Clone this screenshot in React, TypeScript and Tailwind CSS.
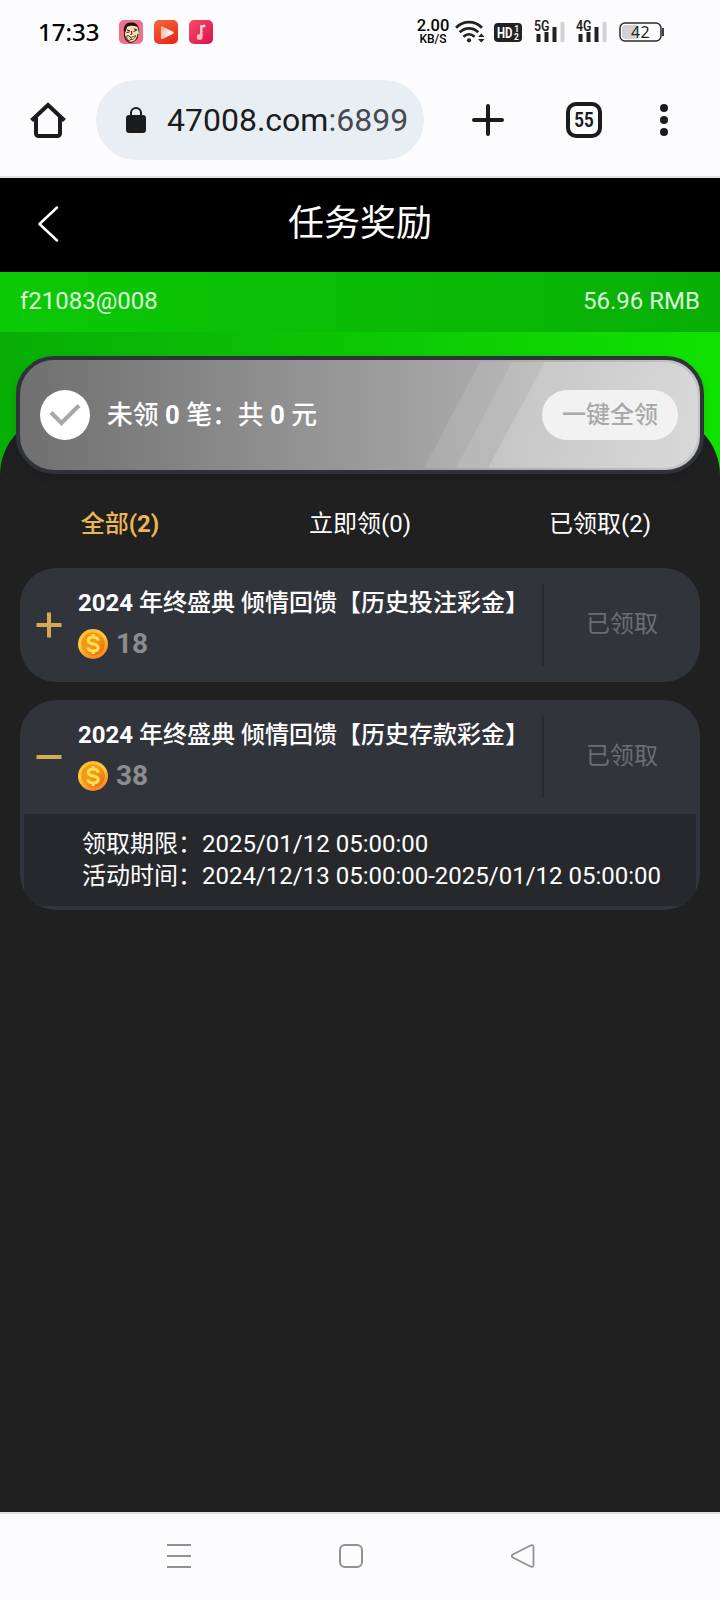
import type { ReactNode } from "react";

function AppFace() {
  return (
    <svg className="h-6 w-6" viewBox="0 0 24 24">
      <rect width="24" height="24" rx="5" fill="#f0708c" />
      <path d="M6 10c0-5 3-7 7-7s7 3 7 7l-.5 6-4 6h-5l-5-5z" fill="#f9dfb4" />
      <path d="M5 12C4 5 8 2 12.500 2.500 17 2 21 6 20 13l-1.500-6C15 5.500 11 5 8 7l-1.500 5z" fill="#1c1412" />
      <path d="M5.500 11v5c1 4 3.500 6 6 6.500 4-.5 7-3.500 7.500-8.500" fill="none" stroke="#2b1a17" strokeWidth="1.100" />
      <path d="M8 10l3 1M14.500 11.500L18 10M7.500 12.500l3-.5M15 9l2.500.5M12.500 11l.5 3-1.500.5" stroke="#2b1a17" strokeWidth="1" fill="none" />
      <path d="M9 16.500c3 1.500 5 .5 7.500-1-.5 3-3 4.500-5 4z" fill="#fff" stroke="#4a2b25" strokeWidth=".9" />
      <path d="M6.500 16.500l3-1 3 3-2.500 3z" fill="#f7c79a" stroke="#2b1a17" strokeWidth=".8" />
    </svg>
  );
}

function AppVideo() {
  return (
    <svg className="h-6 w-6" viewBox="0 0 24 24">
      <defs>
        <linearGradient id="vid" x1="0" y1="0" x2="0.500" y2="1">
          <stop offset="0" stopColor="#f4693a" />
          <stop offset="1" stopColor="#ea2c1c" />
        </linearGradient>
        <linearGradient id="vidp" x1="0" y1="0" x2="1" y2="0.300">
          <stop offset="0" stopColor="#f9b7a2" />
          <stop offset="1" stopColor="#fff" />
        </linearGradient>
      </defs>
      <rect width="24" height="24" rx="5" fill="url(#vid)" />
      <path d="M8 7.500v10.500l10.500-5.200z" fill="url(#vidp)" stroke="url(#vidp)" strokeWidth="2.200" strokeLinejoin="round" />
    </svg>
  );
}

function AppMusic() {
  return (
    <svg className="h-6 w-6" viewBox="0 0 24 24">
      <defs>
        <linearGradient id="mus" x1="0" y1="0" x2="1" y2="1">
          <stop offset="0" stopColor="#fb4c62" />
          <stop offset="1" stopColor="#d5124f" />
        </linearGradient>
      </defs>
      <rect width="24" height="24" rx="5" fill="url(#mus)" />
      <path d="M12.300 16.500V6.500l4-.8" fill="none" stroke="#fdd9de" strokeWidth="2.400" />
      <circle cx="10.600" cy="17" r="2.900" fill="#fdb9c4" />
    </svg>
  );
}

function Wifi() {
  return (
    <svg className="h-6 w-[30px]" viewBox="0 0 30 24">
      <g fill="none" stroke="#222" strokeWidth="2.700">
        <path d="M1 7.700C8.500.3 19.500.3 27 7.700" />
        <path d="M4.700 12.300c5.400-5.200 13.200-5.200 18.600 0" />
        <path d="M8.400 16.800c3.400-3.200 7.800-3.200 11.200 0" />
      </g>
      <circle cx="14" cy="20.300" r="2.100" fill="#222" />
      <path d="M23 17l3.300-3.600L29.600 17zM23 19l3.300 3.600L29.600 19z" fill="#222" />
    </svg>
  );
}

function HdBadge() {
  return (
    <svg className="h-[19px] w-7 overflow-visible" viewBox="0 0 28 19">
      <rect width="28" height="19" rx="4" fill="#222" />
      <g fill="#fff" fontFamily="Roboto, sans-serif" fontWeight="700">
        <text x="3" y="15" fontSize="15" textLength="15.500" lengthAdjust="spacingAndGlyphs">HD</text>
        <text x="20.300" y="9" fontSize="8.500">1</text>
        <text x="20" y="17.300" fontSize="8.500">2</text>
      </g>
    </svg>
  );
}

function Signal({ label }: { label: string }) {
  return (
    <svg className="h-6 w-8 overflow-visible" viewBox="0 0 32 24">
      <text x="0" y="11" fontFamily="Roboto, sans-serif" fontWeight="600" fontSize="14" textLength="15.500" lengthAdjust="spacingAndGlyphs" fill="#222">
        {label}
      </text>
      <path d="M2.500 14h4v8h-4zM10.500 12h4v10h-4zM18.500 7h4v15h-4z" fill="#222" />
      <rect x="26.500" y="2" width="4" height="20" rx=".8" fill="#d2d2d4" />
    </svg>
  );
}

function Battery() {
  return (
    <svg className="h-5 w-[46px]" viewBox="0 0 46 20">
      <rect x="1" y="1" width="41" height="18" rx="5" fill="#fff" stroke="#2b2b2b" strokeWidth="1.500" />
      <path d="M6 3h12v14H6a3 3 0 0 1-3-3V6a3 3 0 0 1 3-3z" fill="#d2d2d2" />
      <path d="M44 6v8" stroke="#2b2b2b" strokeWidth="1.800" />
      <text x="12" y="15.500" fontFamily="'Noto Sans', sans-serif" fontSize="16" letterSpacing=".4" fill="#222">42</text>
    </svg>
  );
}

function StatusBar() {
  return (
    <div className="flex h-16 items-center pr-[55px] pl-[38px]">
      <div className="w-[81px] font-['Noto_Sans',sans-serif] text-[24px] leading-6 font-medium text-black">17:33</div>
      <div className="flex gap-[11px]">
        <AppFace />
        <AppVideo />
        <AppMusic />
      </div>
      <div className="ml-auto flex items-center">
        <div className="w-[34px] text-center font-medium text-black">
          <div className="text-[16.500px] leading-[14px]">2.00</div>
          <div className="text-[12px] leading-[12px]">KB/S</div>
        </div>
        <div className="ml-[5px]"><Wifi /></div>
        <div className="ml-[9px]"><HdBadge /></div>
        <div className="ml-3"><Signal label="5G" /></div>
        <div className="ml-[10px]"><Signal label="4G" /></div>
        <div className="ml-[11px]"><Battery /></div>
      </div>
    </div>
  );
}

function BrowserBar() {
  return (
    <div className="flex h-28 items-center border-b-2 border-[#dfe2e5] pb-[2px]">
      <svg className="ml-[30px] h-9 w-9" viewBox="0 0 36 36">
        <path d="M1.500 18.500L18 3 34.500 18.500M6 15v16.500A2.500 2.500 0 0 0 8.500 34h19a2.500 2.500 0 0 0 2.500-2.500V15" fill="none" stroke="#1a1c1e" strokeWidth="4" />
      </svg>
      <div className="ml-[30px] flex h-20 w-[328px] items-center rounded-full bg-[#e7eef4] pl-[30px]">
        <svg className="h-[26px] w-5" viewBox="0 0 20 26">
          <rect y="8" width="20" height="18" rx="3" fill="#1a1c1e" />
          <path d="M5 9V6a5 5 0 0 1 10 0v3" fill="none" stroke="#1a1c1e" strokeWidth="2" />
        </svg>
        <div className="ml-[21px] text-[32px] leading-10 text-[#1a1c1e]">
          47008.com<span className="text-[#454a50]">:6899</span>
        </div>
      </div>
      <svg className="ml-12 h-8 w-8" viewBox="0 0 32 32">
        <path d="M16 2v28M2 16h28" stroke="#1a1c1e" strokeWidth="4" strokeLinecap="round" />
      </svg>
      <svg className="ml-[62px] h-9 w-9" viewBox="0 0 36 36">
        <rect x="2" y="2" width="32" height="32" rx="8" fill="none" stroke="#1a1c1e" strokeWidth="4" />
        <text x="8.300" y="25" fontFamily="Roboto, sans-serif" fontWeight="700" fontSize="19.500" textLength="19.500" lengthAdjust="spacingAndGlyphs" fill="#1a1c1e">55</text>
      </svg>
      <svg className="ml-[58px] h-8 w-2" viewBox="0 0 8 32">
        <g fill="#1a1c1e">
          <circle cx="4" cy="4" r="4" />
          <circle cx="4" cy="16" r="4" />
          <circle cx="4" cy="28" r="4" />
        </g>
      </svg>
    </div>
  );
}

function Coin() {
  return (
    <svg className="h-[30px] w-[30px]" viewBox="0 0 30 30">
      <defs>
        <linearGradient id="rim" x1="0" y1="0" x2="0.400" y2="1">
          <stop offset="0" stopColor="#fdb52c" />
          <stop offset=".5" stopColor="#fdcb40" />
          <stop offset="1" stopColor="#f98a2a" />
        </linearGradient>
        <linearGradient id="face" x1="0" y1="0" x2="1" y2="1">
          <stop offset="0" stopColor="#f3960f" />
          <stop offset=".5" stopColor="#f59a12" />
          <stop offset="1" stopColor="#e4660a" />
        </linearGradient>
      </defs>
      <circle cx="15" cy="15" r="15" fill="url(#rim)" />
      <circle cx="15" cy="15" r="11.800" fill="url(#face)" />
      <path d="M20.200 11.500c-.5-2.200-2.400-3.400-5-3.400-2.900 0-4.900 1.300-4.900 3.400 0 4.800 9.900 2.200 9.900 7 0 2.100-2.100 3.400-5 3.400-2.800 0-4.900-1.300-5.400-3.400M15.200 5v3M15.200 22v3" fill="none" stroke="#ffe05a" strokeWidth="3" />
    </svg>
  );
}

type TaskProps = { name: string; amount: string; open?: boolean; children?: ReactNode };

function TaskCard({ name, amount, open, children }: TaskProps) {
  return (
    <section className="overflow-hidden rounded-[36px] bg-[#32343c]">
      <div className="flex h-[114px]">
        <div className="flex w-[58px] items-center pl-4">
          <svg className="h-[26px] w-[26px]" viewBox="0 0 26 26">
            <path d={open ? "M.5 13h25" : "M.5 13h25M13 .5v25"} stroke="#d2ab52" strokeWidth="4" />
          </svg>
        </div>
        <div className="flex w-[464px] flex-col pt-[19px]">
          <h2 className="text-[24px] leading-8 font-medium whitespace-nowrap text-white">
            <b className="font-bold">2024</b> 年终盛典 倾情回馈【历史{name}彩金】
          </h2>
          <div className="mt-[10px] flex items-center">
            <Coin />
            <span className="ml-2 text-[28px] leading-[30px] font-bold text-[#8b8c90]">{amount}</span>
          </div>
        </div>
        <div className="my-4 flex flex-1 items-center justify-center border-l-2 border-[#292a2f] pb-[2px] text-[24px] leading-8 text-[#6c6d70]">
          已领取
        </div>
      </div>
      {children}
    </section>
  );
}

export default function App() {
  return (
    <div className="flex h-[1600px] w-[720px] flex-col overflow-hidden bg-[#202020] font-['Roboto','Noto_Sans_CJK_SC',sans-serif] whitespace-nowrap">
      <div className="h-[178px] shrink-0 bg-[#fcfcfe]">
        <StatusBar />
        <div className="h-[2px]" />
        <BrowserBar />
      </div>
      <header className="grid h-[94px] shrink-0 grid-cols-[80px_1fr_80px] items-center bg-black pb-[2px]">
        <svg className="ml-[37px] h-9 w-[22px]" viewBox="0 0 22 36">
          <path d="M20 1.500L2.500 18 20 34.500" fill="none" stroke="#fff" strokeWidth="2.500" strokeLinecap="round" strokeLinejoin="round" />
        </svg>
        <h1 className="text-center text-[36px] leading-[48px] text-white">任务奖励</h1>
      </header>
      <div className="flex h-[60px] shrink-0 items-center justify-between bg-gradient-to-r from-[#0cc905] to-[#08af06] px-5 pb-[2px] text-[24px] leading-8 text-white/85">
        <span>f21083@008</span>
        <span>56.96 RMB</span>
      </div>
      <div className="h-[143px] shrink-0 bg-gradient-to-r from-[#08ad06] to-[#10e200]">
        <div className="h-[83px]" />
        <div className="h-[60px] rounded-t-[60px] bg-[#202020]" />
      </div>
      <div className="relative z-10 mx-4 -mt-[119px] h-[118px] shrink-0 overflow-hidden rounded-[38px] border-4 border-[#2f3338] bg-gradient-to-r from-[#707070] via-[#9a9a9a] to-[#c4c4c4] shadow-[0_4px_8px_rgba(0,0,0,0.12)]">
        <svg className="absolute top-0 left-0 h-[110px] w-[680px]" viewBox="0 0 680 110">
          <defs>
            <linearGradient id="shine" x1="0" y1="0" x2="1" y2="1">
              <stop offset="0" stopColor="#fff" stopOpacity=".3" />
              <stop offset="1" stopColor="#fff" stopOpacity=".42" />
            </linearGradient>
          </defs>
          <path d="M460 2L404 108H644a34 34 0 0 0 34-34V36a34 34 0 0 0-34-34z" fill="#fff" fillOpacity=".1" />
          <path d="M492 2L436 108H644a34 34 0 0 0 34-34V36a34 34 0 0 0-34-34z" fill="#fff" fillOpacity=".1" />
          <path d="M525 2L468 108H644a34 34 0 0 0 34-34V36a34 34 0 0 0-34-34z" fill="url(#shine)" fillOpacity=".5" />
        </svg>
        <div className="relative flex h-full items-center pr-[22px] pl-5">
          <svg className="h-[50px] w-[50px]" viewBox="0 0 50 50">
            <circle cx="25" cy="25" r="25" fill="#fff" />
            <path d="M11 22.500L21.500 33 39 15.500" fill="none" stroke="#a8a8a8" strokeWidth="4.200" />
          </svg>
          <div className="ml-[17px] pb-[1px] text-[25.8px] leading-9 font-medium text-white">
            未领 <b className="font-bold">0</b> 笔：共 <b className="font-bold">0</b> 元
          </div>
          <button className="ml-auto h-[50px] w-[136px] rounded-full bg-[#f2f2f2] text-[24px] leading-8 font-medium text-[#a9a9a9]">
            一键全领
          </button>
        </div>
      </div>
      <nav className="grid h-[94px] shrink-0 grid-cols-3 items-center pt-[6px] text-center text-[24px] leading-8 text-white">
        <span className="font-medium text-[#ebb650]">全部<b className="font-bold">(2)</b></span>
        <span>立即领(0)</span>
        <span>已领取(2)</span>
      </nav>
      <main className="flex flex-1 flex-col gap-[18px] px-5">
        <TaskCard name="投注" amount="18" />
        <TaskCard name="存款" amount="38" open>
          <div className="mx-1 mb-1 h-[92px] bg-[#27282c] pt-[14px] pl-[58px] text-[24px] leading-8 text-white">
            <div>领取期限：2025/01/12 05:00:00</div>
            <div>活动时间：2024/12/13 05:00:00-2025/01/12 05:00:00</div>
          </div>
        </TaskCard>
      </main>
      <footer className="flex h-[88px] shrink-0 items-center border-t-2 border-[#dfe0e2] bg-[#fcfcfe] pb-[2px] pl-[167px]">
        <svg className="h-6 w-6" viewBox="0 0 24 24">
          <path d="M0 1h24M0 12h24M0 23h24" stroke="#919193" strokeWidth="2" />
        </svg>
        <svg className="ml-[148px] h-6 w-6" viewBox="0 0 24 24">
          <rect x="1" y="1" width="22" height="22" rx="5" fill="none" stroke="#919193" strokeWidth="2" />
        </svg>
        <svg className="ml-[148px] h-6 w-6" viewBox="0 0 24 24">
          <path d="M1.800 10.500L20 1.300Q22.500.8 22.500 3v18q0 2.200-2.500 1.700L1.800 13.500q-2-1.500 0-3z" fill="none" stroke="#919193" strokeWidth="1.800" strokeLinejoin="round" />
        </svg>
      </footer>
    </div>
  );
}
